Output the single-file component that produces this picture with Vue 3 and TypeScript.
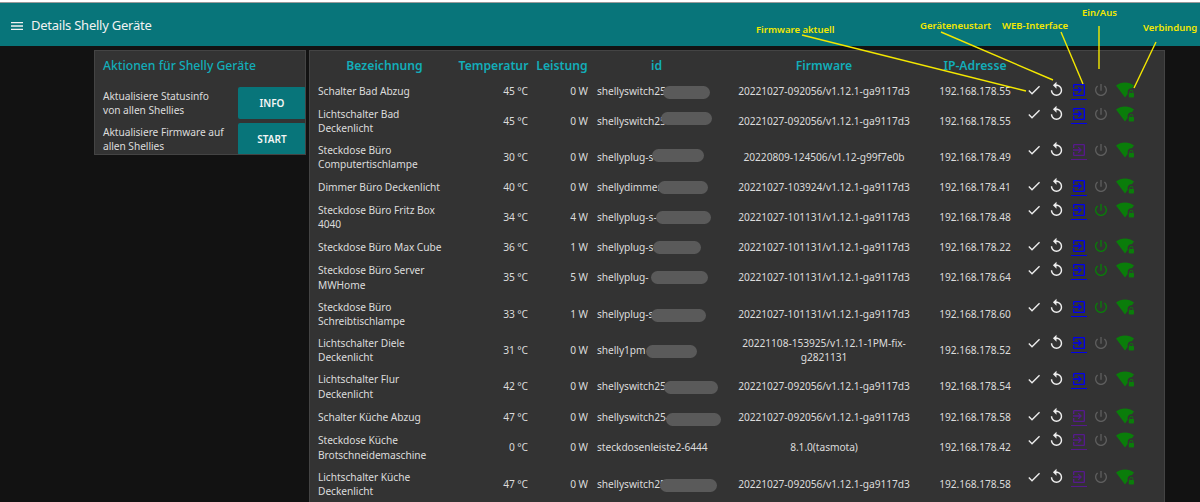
<script setup lang="ts">
interface Device {
  name: string
  temp: string
  watt: string
  id: string
  pill?: { x: number; w: number; dy: number }
  fw: string
  ip: string
  visited: boolean
  on: boolean
  loose?: boolean
}

const columnOffset = 593

const devices: Device[] = [
  { name: 'Schalter Bad Abzug', temp: '45 °C', watt: '0 W', id: 'shellyswitch25', pill: { x: 664, w: 47, dy: 1 }, fw: '20221027-092056/v1.12.1-ga9117d3', ip: '192.168.178.55', visited: false, on: false },
  { name: 'Lichtschalter Bad Deckenlicht', temp: '45 °C', watt: '0 W', id: 'shellyswitch25', pill: { x: 662, w: 51, dy: -2.5 }, fw: '20221027-092056/v1.12.1-ga9117d3', ip: '192.168.178.55', visited: false, on: false },
  { name: 'Steckdose Büro Computertischlampe', temp: '30 °C', watt: '0 W', id: 'shellyplug-s', pill: { x: 653, w: 52, dy: -2 }, fw: '20220809-124506/v1.12-g99f7e0b', ip: '192.168.178.49', visited: true, on: false },
  { name: 'Dimmer Büro Deckenlicht', temp: '40 °C', watt: '0 W', id: 'shellydimmer', pill: { x: 659, w: 50, dy: 0 }, fw: '20221027-103924/v1.12.1-ga9117d3', ip: '192.168.178.41', visited: false, on: false },
  { name: 'Steckdose Büro Fritz Box 4040', temp: '34 °C', watt: '4 W', id: 'shellyplug-s-', pill: { x: 657, w: 55, dy: 0 }, fw: '20221027-101131/v1.12.1-ga9117d3', ip: '192.168.178.48', visited: false, on: true },
  { name: 'Steckdose Büro Max Cube', temp: '36 °C', watt: '1 W', id: 'shellyplug-s', pill: { x: 654, w: 48, dy: 0 }, fw: '20221027-101131/v1.12.1-ga9117d3', ip: '192.168.178.22', visited: false, on: true },
  { name: 'Steckdose Büro Server MWHome', temp: '35 °C', watt: '5 W', id: 'shellyplug-', pill: { x: 652, w: 57, dy: 0 }, fw: '20221027-101131/v1.12.1-ga9117d3', ip: '192.168.178.64', visited: false, on: true, loose: true },
  { name: 'Steckdose Büro Schreibtischlampe', temp: '33 °C', watt: '1 W', id: 'shellyplug-s', pill: { x: 652, w: 55, dy: 1 }, fw: '20221027-101131/v1.12.1-ga9117d3', ip: '192.168.178.60', visited: false, on: true },
  { name: 'Lichtschalter Diele Deckenlicht', temp: '31 °C', watt: '0 W', id: 'shelly1pm', pill: { x: 647, w: 51, dy: 1 }, fw: '20221108-153925/v1.12.1-1PM-fix-g2821131', ip: '192.168.178.52', visited: false, on: false },
  { name: 'Lichtschalter Flur Deckenlicht', temp: '42 °C', watt: '0 W', id: 'shellyswitch25', pill: { x: 665, w: 54, dy: 1 }, fw: '20221027-092056/v1.12.1-ga9117d3', ip: '192.168.178.54', visited: false, on: false, loose: true },
  { name: 'Schalter Küche Abzug', temp: '47 °C', watt: '0 W', id: 'shellyswitch25-', pill: { x: 667, w: 55, dy: 2 }, fw: '20221027-092056/v1.12.1-ga9117d3', ip: '192.168.178.58', visited: true, on: false },
  { name: 'Steckdose Küche Brotschneidemaschine', temp: '0 °C', watt: '0 W', id: 'steckdosenleiste2-6444', fw: '8.1.0(tasmota)', ip: '192.168.178.42', visited: true, on: false, loose: true },
  { name: 'Lichtschalter Küche Deckenlicht', temp: '47 °C', watt: '0 W', id: 'shellyswitch25', pill: { x: 661, w: 57, dy: 1 }, fw: '20221027-092056/v1.12.1-ga9117d3', ip: '192.168.178.58', visited: true, on: false },
]

const pillStyle = (p: { x: number; w: number; dy: number }) => ({
  left: `${p.x - columnOffset}px`,
  width: `${p.w}px`,
  marginTop: `${p.dy - 6.5}px`,
})

const labels = [
  { text: 'Firmware aktuell', x: 756, y: 33 },
  { text: 'Geräteneustart', x: 920, y: 29 },
  { text: 'WEB-Interface', x: 1002, y: 29 },
  { text: 'Ein/Aus', x: 1082, y: 16 },
  { text: 'Verbindung', x: 1143, y: 31 },
]

const lines = [
  [802, 35, 1026, 91],
  [941, 32, 1053, 80],
  [1061, 32, 1083, 84],
  [1099, 26, 1099, 69],
  [1156, 42, 1134, 88],
]
</script>

<template>
  <div class="page">
    <div class="top-edge"></div>
    <header class="toolbar">
      <svg class="menu" viewBox="0 0 24 24"><path d="M3 6h18v2H3V6m0 5h18v2H3v-2m0 5h18v2H3v-2z" /></svg>
      <span class="title">Details Shelly Geräte</span>
    </header>

    <main class="content">
      <section class="card actions">
        <h2 class="actions-title">Aktionen für Shelly Geräte</h2>
        <div class="action">
          <p>Aktualisiere Statusinfo von allen Shellies</p>
          <button type="button">INFO</button>
        </div>
        <div class="action">
          <p>Aktualisiere Firmware auf allen Shellies</p>
          <button type="button">START</button>
        </div>
      </section>

      <section class="card devices">
        <table>
          <colgroup>
            <col class="c-name" /><col class="c-temp" /><col class="c-watt" /><col class="c-id" />
            <col class="c-fw" /><col class="c-ip" /><col class="c-i1" /><col class="c-i2" />
            <col class="c-i3" /><col class="c-i4" /><col class="c-i5" />
          </colgroup>
          <thead>
            <tr>
              <th>Bezeichnung</th>
              <th>Temperatur</th>
              <th>Leistung</th>
              <th>id</th>
              <th>Firmware</th>
              <th>IP-Adresse</th>
              <th colspan="5"></th>
            </tr>
          </thead>
          <tbody>
            <tr v-for="d in devices" :key="d.name" :class="{ loose: d.loose }">
              <td>{{ d.name }}</td>
              <td class="num">{{ d.temp }}</td>
              <td class="num">{{ d.watt }}</td>
              <td class="id">
                {{ d.id }}
                <span v-if="d.pill" class="pill" :style="pillStyle(d.pill)"></span>
              </td>
              <td class="center">{{ d.fw }}</td>
              <td class="center">{{ d.ip }}</td>
              <td class="icon">
                <svg class="ico white" viewBox="0 0 24 24"><path d="M21 7L9 19l-5.5-5.5 1.41-1.41L9 16.17 19.59 5.59 21 7z" /></svg>
              </td>
              <td class="icon">
                <svg class="ico white restart" viewBox="0 0 24 24"><path d="M12 5V1L7 6l5 5V7c3.31 0 6 2.69 6 6s-2.69 6-6 6-6-2.69-6-6H4c0 4.42 3.58 8 8 8s8-3.58 8-8-3.58-8-8-8z" /></svg>
              </td>
              <td class="icon">
                <a class="web" :class="{ visited: d.visited }">
                  <svg class="ico" viewBox="0 0 24 24"><path d="M10.09 15.59L11.5 17l5-5-5-5-1.41 1.41L12.67 11H3v2h9.67l-2.58 2.59zM19 3H5c-1.11 0-2 .9-2 2v4h2V5h14v14H5v-4H3v4c0 1.1.89 2 2 2h14c1.1 0 2-.9 2-2V5c0-1.1-.9-2-2-2z" /></svg>
                </a>
              </td>
              <td class="icon">
                <svg class="ico power" :class="{ on: d.on }" viewBox="0 0 24 24"><path d="M13 3h-2v10h2V3zm4.83 2.17l-1.42 1.42C17.99 7.86 19 9.81 19 12c0 3.87-3.13 7-7 7s-7-3.13-7-7c0-2.19 1.01-4.14 2.58-5.42L6.17 5.17C4.23 6.82 3 9.26 3 12c0 4.97 4.03 9 9 9s9-4.03 9-9c0-2.74-1.23-5.18-3.17-6.83z" /></svg>
              </td>
              <td class="icon">
                <svg class="ico wifi" viewBox="0 0 24 24"><path d="M20.5 9.5c.28 0 .55.04.81.08L24 6c-3.34-2.51-7.5-4-12-4S3.34 3.49 0 6l12 16 3.5-4.67V14.5c0-2.76 2.24-5 5-5zM23 16v-1.5c0-1.38-1.12-2.5-2.5-2.5S18 13.12 18 14.5V16c-.55 0-1 .45-1 1v4c0 .55.45 1 1 1h5c.55 0 1-.45 1-1v-4c0-.55-.45-1-1-1zm-1 0h-3v-1.5c0-.83.67-1.5 1.5-1.5s1.5.67 1.5 1.5V16z" /></svg>
              </td>
            </tr>
          </tbody>
        </table>
      </section>
    </main>

    <svg class="notes" viewBox="0 0 1200 502">
      <line v-for="(l, i) in lines" :key="i" :x1="l[0]" :y1="l[1]" :x2="l[2]" :y2="l[3]" />
      <text v-for="t in labels" :key="t.text" :x="t.x" :y="t.y">{{ t.text }}</text>
    </svg>
  </div>
</template>

<style>
html,
body {
  margin: 0;
  background: #121212;
}
</style>

<style scoped>
.page {
  position: relative;
  height: 502px;
  overflow: hidden;
  background: #121212;
  color: #dcdcdc;
  font-family: 'Noto Sans', 'Open Sans', sans-serif;
  font-size: 10.2px;
  letter-spacing: -0.05px;
  line-height: 14.5px;
}
.top-edge {
  height: 2px;
  background: #fff;
  border-bottom: 1px solid #9a9a9a;
}
.toolbar {
  box-sizing: border-box;
  display: flex;
  align-items: center;
  height: 43px;
  padding: 2px 0 0 9px;
  gap: 6px;
  background: #08757a;
  color: #f2f2f2;
}
.menu {
  width: 16px;
  height: 16px;
  fill: #f2f2f2;
}
.title {
  font-size: 13px;
  letter-spacing: -0.24px;
}
.content {
  display: flex;
  align-items: flex-start;
  gap: 3px;
  padding: 4px 0 0 94px;
}
.card {
  box-sizing: border-box;
  background: #333;
  border: 1px solid #444;
}
.actions {
  width: 212px;
  height: 105px;
  overflow: hidden;
  flex: none;
}
.actions-title {
  margin: 0;
  padding: 8px 8px 0;
  height: 26px;
  font-size: 12.2px;
  line-height: 14px;
  font-weight: 500;
  letter-spacing: 0;
  color: #12adb9;
}
.action {
  display: flex;
  align-items: center;
  justify-content: space-between;
  height: 36px;
  padding-left: 8px;
}
.action p {
  margin: 0;
  width: 125px;
}
.action button {
  flex: none;
  width: 68px;
  height: 32px;
  margin-right: -1px;
  border: 0;
  border-radius: 2px;
  background: #08757a;
  color: #f5f5f5;
  font: 600 10px 'Noto Sans', sans-serif;
}
.devices {
  width: 856px;
  height: 460px;
  overflow: hidden;
  flex: none;
  padding: 0 0 0 4px;
}
table {
  table-layout: fixed;
  width: 824px;
  border-collapse: collapse;
}
.c-name { width: 141px; }
.c-temp { width: 77px; }
.c-watt { width: 60px; }
.c-id { width: 129px; }
.c-fw { width: 206px; }
.c-ip { width: 96px; }
.c-i1 { width: 22px; }
.c-i2 { width: 22px; }
.c-i3 { width: 23px; }
.c-i4 { width: 22px; }
.c-i5 { width: 26px; }
th {
  height: 25px;
  padding: 3px 0 0;
  font-size: 12.2px;
  font-weight: 600;
  letter-spacing: 0;
  color: #12adb9;
  white-space: nowrap;
}
td {
  padding: 3.5px 4px;
  vertical-align: middle;
}
.loose td {
  padding-top: 4px;
  padding-bottom: 4px;
}
.num {
  text-align: right;
}
.id {
  position: relative;
  padding-left: 5px;
  white-space: nowrap;
}
.pill {
  position: absolute;
  top: 50%;
  height: 13px;
  border-radius: 7px;
  background: #5a5a5a;
}
.center {
  text-align: center;
}
td.icon {
  padding: 0;
  height: 24px;
  vertical-align: top;
  text-align: center;
  line-height: 0;
}
.ico {
  width: 16px;
  height: 16px;
  margin-top: 3px;
  fill: currentColor;
}
.white {
  color: #eee;
}
.restart {
  width: 17px;
  height: 17px;
  margin-top: 2px;
}
.web {
  display: inline-block;
  height: 20px;
  color: #0000ee;
  border-bottom: 1.5px solid currentColor;
}
.web.visited {
  color: #551a8b;
}
.power {
  color: #5e5e5e;
}
.power.on {
  color: #0a7d0a;
}
.wifi {
  width: 18px;
  height: 18px;
  margin-top: 2px;
  color: #0a7d0a;
}
.notes {
  position: absolute;
  inset: 0;
  width: 1200px;
  height: 502px;
  pointer-events: none;
}
.notes line {
  stroke: #f4e800;
  stroke-width: 1.4;
}
.notes text {
  fill: #f4e800;
  font: 600 9.5px 'Noto Sans', sans-serif;
  letter-spacing: 0;
}
</style>
